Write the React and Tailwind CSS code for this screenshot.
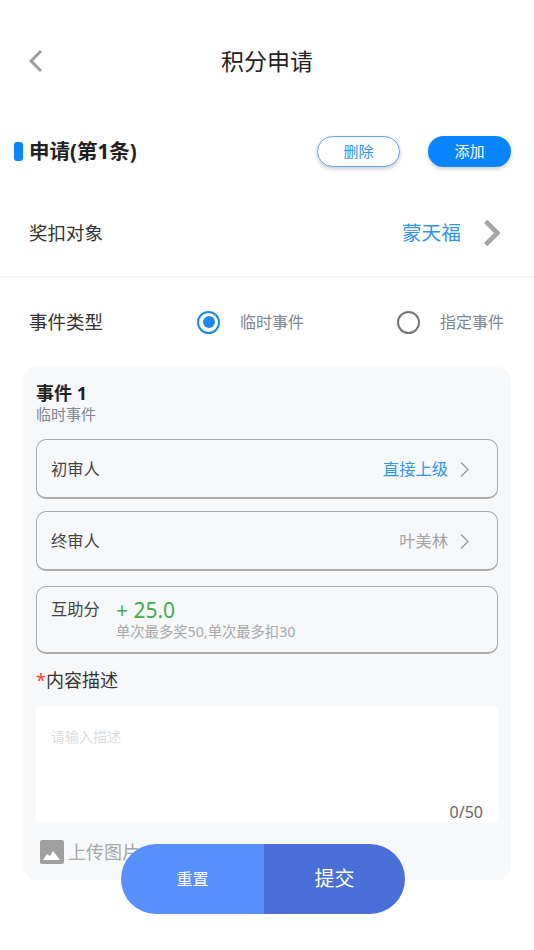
import { useState } from "react"

const font = "font-['Noto_Sans','Noto_Sans_CJK_SC',sans-serif]"

function Chevron({ className, width = 2 }) {
  return (
    <svg viewBox="0 0 14 24" fill="none" className={className}>
      <path d="M2 2l10 10L2 22" stroke="currentColor" strokeWidth={width} />
    </svg>
  )
}

function Radio({ checked, label }) {
  return (
    <div className="flex items-center gap-[20px]">
      <span
        className={
          checked
            ? "flex h-[23px] w-[23px] items-center justify-center rounded-full border-[2.5px] border-[#1e88e5]"
            : "flex h-[23px] w-[23px] items-center justify-center rounded-full border-[2.5px] border-[#757575]"
        }
      >
        {checked && <span className="h-[12px] w-[12px] rounded-full bg-[#1e88e5]" />}
      </span>
      <span className="text-[16px] text-[#7d8590]">{label}</span>
    </div>
  )
}

function PickRow({ label, value, valueClass }) {
  return (
    <div className="flex h-[60px] items-center justify-between rounded-[10px] border border-[#aaaaaa] border-b-2 pl-[14px] pr-[27px] pt-[1px]">
      <span className="text-[16.3px] text-[#444444]">{label}</span>
      <div className="flex items-center gap-[11px]">
        <span className={valueClass}>{value}</span>
        <Chevron className="h-[17px] w-[11px] text-[#9e9e9e]" />
      </div>
    </div>
  )
}

export default function App() {
  const [text, setText] = useState("")

  return (
    <div className={`${font} relative h-[950px] w-[534px] overflow-hidden bg-white`}>
      <header className="relative flex h-[122px] items-center justify-center">
        <Chevron width={3} className="absolute left-[29px] top-[49px] h-[24px] w-[14px] rotate-180 text-[#9e9e9e]" />
        <h1 className="text-[23px] text-[#222222]">积分申请</h1>
      </header>

      <div className="flex h-[58px] items-center justify-between pl-[14px] pr-[23px]">
        <div className="flex items-center gap-[6px]">
          <span className="h-[19px] w-[9px] rounded-[3px] bg-[#0a84ff]" />
          <span className="text-[20.5px] font-bold text-[#222222]">申请(第1条)</span>
        </div>
        <div className="flex gap-[28px]">
          <button className="h-[31px] w-[83px] rounded-full border border-[#5aa9f5] bg-white text-[15px] text-[#2f96f0] shadow-[0_2px_4px_rgba(0,0,0,0.2)]">
            删除
          </button>
          <button className="h-[31px] w-[83px] rounded-full bg-[#0a84ff] text-[15px] text-white shadow-[0_2px_4px_rgba(0,0,0,0.2)]">
            添加
          </button>
        </div>
      </div>

      <div className="mt-[10px] flex h-[87px] items-center justify-between border-b border-[#eeeeee] pl-[29px] pr-[34px]">
        <span className="text-[18.5px] text-[#333333]">奖扣对象</span>
        <div className="flex items-center gap-[22px]">
          <span className="text-[19.7px] text-[#2f96f0]">蒙天福</span>
          <Chevron width={4} className="h-[28px] w-[17px] text-[#a6a6a6]" />
        </div>
      </div>

      <div className="flex h-[90px] items-center pl-[29px] pr-[30px]">
        <span className="w-[168px] text-[18.5px] text-[#333333]">事件类型</span>
        <div className="flex flex-1 justify-between">
          <Radio checked label="临时事件" />
          <Radio label="指定事件" />
        </div>
      </div>

      <div className="mx-[23px] h-[513px] rounded-[14px] bg-[#f7f8fa] px-[13px] pt-[14px]">
        <div className="text-[18px] font-bold leading-[24px] text-[#222222]">事件 1</div>
        <div className="text-[15px] leading-[18px] text-[#7d8590]">临时事件</div>

        <div className="mt-[16px] flex flex-col gap-[12px]">
          <PickRow label="初审人" value="直接上级" valueClass="text-[16.3px] text-[#2f96f0]" />
          <PickRow label="终审人" value="叶美林" valueClass="text-[16.3px] text-[#a3a3a3]" />
        </div>

        <div className="mt-[15px] flex h-[68px] rounded-[10px] border border-[#aaaaaa] border-b-2 pl-[14px] pt-[10px]">
          <span className="w-[65px] text-[16.3px] leading-[24px] text-[#444444]">互助分</span>
          <div>
            <div className="text-[21px] leading-[26px] text-[#43ac4b]">+ 25.0</div>
            <div className="text-[14.3px] leading-[18px] text-[#a8a8a8]">单次最多奖50,单次最多扣30</div>
          </div>
        </div>

        <div className="mt-[13px] text-[18px] leading-[26px] text-[#333333]">
          <span className="text-[#f44336]">*</span>内容描述
        </div>

        <div className="relative mt-[14px] h-[116px] rounded-[4px] bg-white">
          <textarea
            value={text}
            onChange={e => setText(e.target.value)}
            placeholder="请输入描述"
            className="h-full w-full resize-none bg-transparent px-[15px] pt-[20px] text-[14px] leading-[20px] placeholder:text-[#dddddd] focus:outline-none"
          />
          <span className="absolute bottom-[-1px] right-[15px] text-[16px] text-[#666666]">0/50</span>
        </div>

        <div className="mt-[17px] flex items-center gap-[4px] pl-[4px]">
          <svg viewBox="0 0 24 24" className="h-[24px] w-[24px]">
            <rect width="24" height="24" rx="2" fill="#a0a0a0" />
            <path d="M3 20l4-6 3 2 3-5 7 9z" fill="#ffffff" />
          </svg>
          <span className="text-[18px] leading-[24px] text-[#a8a8a8]">上传图片</span>
        </div>
      </div>

      <div className="absolute left-[121px] top-[844px] flex h-[70px] w-[284px] overflow-hidden rounded-full text-white">
        <button className="w-[143px] bg-[#5890ff] text-[16px]">重置</button>
        <button className="flex-1 bg-[#4a6fd9] text-[20px]">提交</button>
      </div>
    </div>
  )
}
